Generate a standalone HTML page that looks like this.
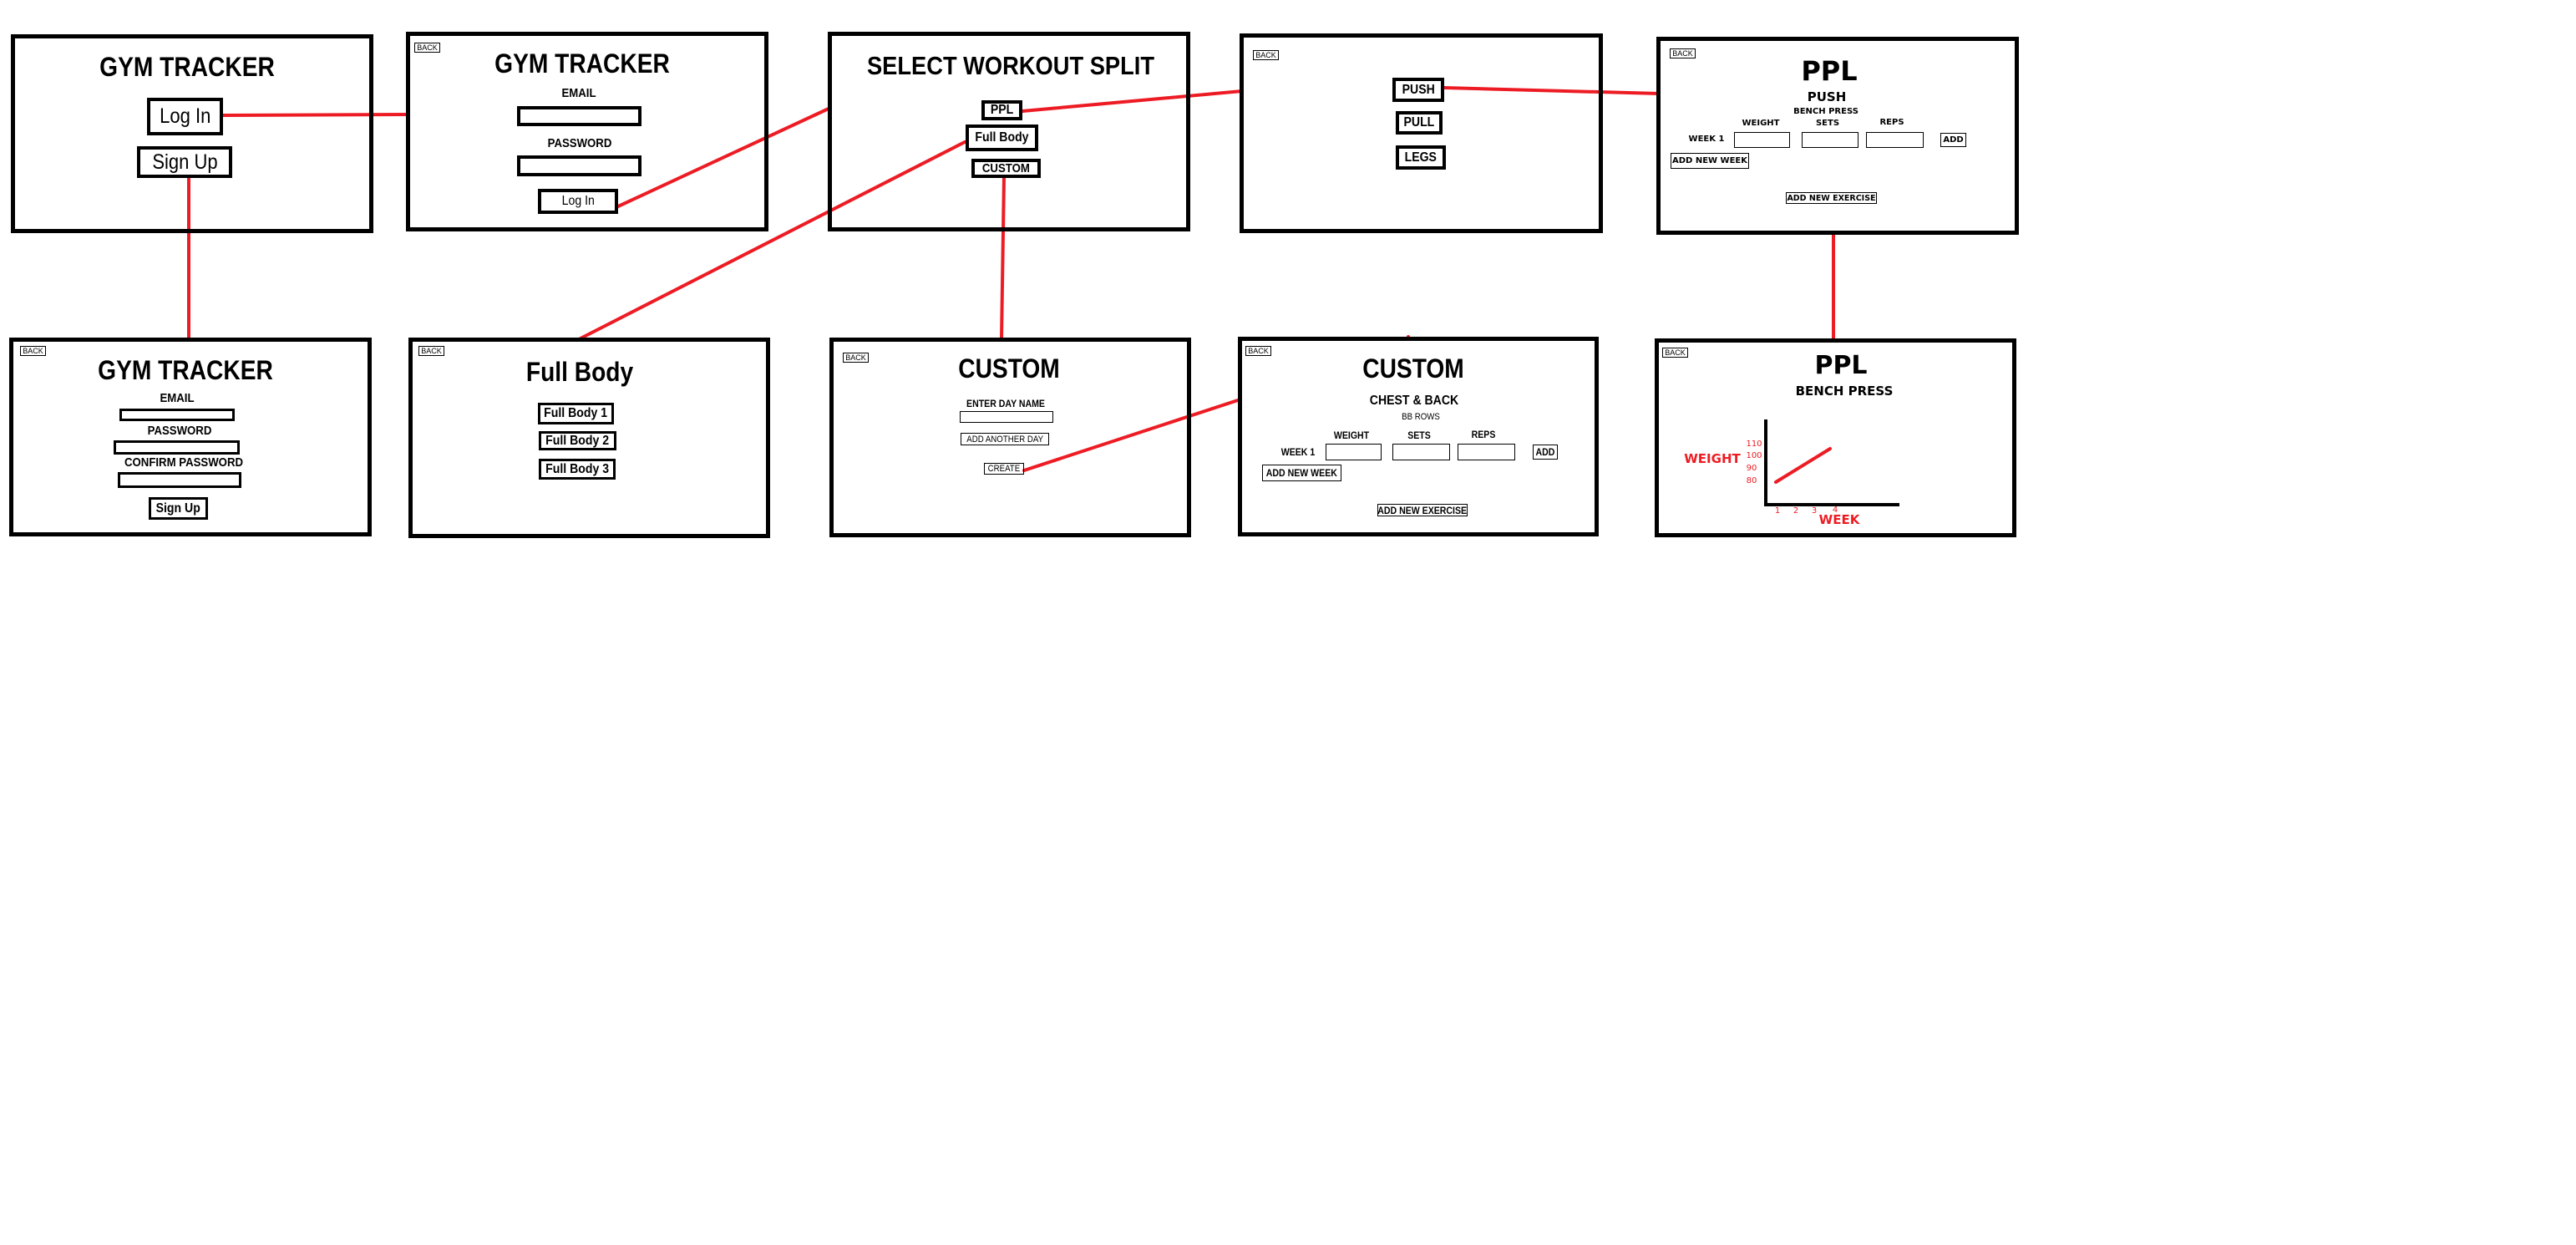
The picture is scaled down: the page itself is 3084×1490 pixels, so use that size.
<!DOCTYPE html>
<html><head><meta charset="utf-8"><style>
html,body{margin:0;padding:0;background:#fff;width:3084px;height:1490px;overflow:hidden;position:relative;font-family:"Liberation Sans",sans-serif;color:#000}
.b{position:absolute;border:5px solid #000;box-sizing:border-box}
.k{position:absolute;border:4px solid #000;box-sizing:border-box;display:flex;align-items:center;justify-content:center;white-space:nowrap;font-weight:bold}
.i{position:absolute;border:2px solid #000;box-sizing:border-box;display:flex;align-items:center;justify-content:center;white-space:nowrap}
.t{position:absolute;white-space:nowrap;line-height:1;transform:translateX(-50%) scaleX(.88);font-weight:bold}
.bk{position:absolute;border:1px solid #000;font-size:9px;line-height:10px;padding:0 1px;box-sizing:border-box;height:12px;width:31px;text-align:center}
.s{display:inline-block;transform:scaleX(.88)}
.r{color:#ed1c24}
.w{font-family:"DejaVu Sans",sans-serif;transform:translateX(-50%)}
</style></head><body>
<svg style="position:absolute;left:0;top:0" width="3084" height="1490">
<g stroke="#ed1c24" stroke-width="4" fill="none" stroke-linecap="round">
<line x1="267" y1="138" x2="487" y2="137"/>
<line x1="226" y1="214" x2="226" y2="405"/>
<line x1="740" y1="247" x2="992" y2="130"/>
<line x1="1155" y1="170" x2="695" y2="405"/>
<line x1="1224" y1="133" x2="1487" y2="109"/>
<line x1="1202" y1="213" x2="1199" y2="405"/>
<line x1="1729" y1="105" x2="1986" y2="112"/>
<line x1="1226" y1="563" x2="1482" y2="479"/>
<line x1="2195" y1="281" x2="2195" y2="405"/>
<line x1="1686" y1="403" x2="1686" y2="405"/>
</g></svg>

<!-- Box1 -->
<div class="b" style="left:13px;top:41px;width:434px;height:238px"></div>
<div class="t" style="left:224px;top:64px;font-size:32px">GYM TRACKER</div>
<div class="k" style="left:176px;top:117px;width:91px;height:45px;font-weight:normal;font-size:25px"><span class="s">Log In</span></div>
<div class="k" style="left:164px;top:175px;width:114px;height:38px;font-weight:normal;font-size:25px"><span class="s">Sign Up</span></div>

<!-- Box2 -->
<div class="b" style="left:486px;top:38px;width:434px;height:239px"></div>
<div class="bk" style="left:496px;top:51px">BACK</div>
<div class="t" style="left:697px;top:60px;font-size:32px">GYM TRACKER</div>
<div class="t" style="left:693px;top:104px;font-size:15px">EMAIL</div>
<div class="k" style="left:619px;top:127px;width:149px;height:24px"></div>
<div class="t" style="left:694px;top:164px;font-size:15px">PASSWORD</div>
<div class="k" style="left:619px;top:186px;width:149px;height:25px"></div>
<div class="k" style="left:644px;top:226px;width:96px;height:30px;font-weight:normal;font-size:16px"><span class="s">Log In</span></div>

<!-- Box3 select -->
<div class="b" style="left:991px;top:38px;width:434px;height:239px"></div>
<div class="t" style="left:1210px;top:63px;font-size:31px">SELECT WORKOUT SPLIT</div>
<div class="k" style="left:1175px;top:120px;width:49px;height:24px;font-size:16px"><span class="s">PPL</span></div>
<div class="k" style="left:1156px;top:149px;width:87px;height:32px;font-size:16px"><span class="s">Full Body</span></div>
<div class="k" style="left:1163px;top:190px;width:83px;height:23px;font-size:15px"><span class="s">CUSTOM</span></div>

<!-- Box6 push pull legs -->
<div class="b" style="left:1484px;top:40px;width:435px;height:239px"></div>
<div class="bk" style="left:1500px;top:60px">BACK</div>
<div class="k" style="left:1667px;top:93px;width:62px;height:29px;font-size:16px"><span class="s">PUSH</span></div>
<div class="k" style="left:1671px;top:133px;width:56px;height:28px;font-size:16px"><span class="s">PULL</span></div>
<div class="k" style="left:1671px;top:174px;width:60px;height:29px;font-size:16px"><span class="s">LEGS</span></div>

<!-- Box9 PPL -->
<div class="b" style="left:1983px;top:44px;width:434px;height:237px"></div>
<div class="bk" style="left:1999px;top:58px">BACK</div>
<div class="t w" style="left:2190px;top:69px;font-size:32px">PPL</div>
<div class="t w" style="left:2187px;top:109px;font-size:15px">PUSH</div>
<div class="t w" style="left:2186px;top:129px;font-size:10px">BENCH PRESS</div>
<div class="t w" style="left:2108px;top:143px;font-size:10px">WEIGHT</div>
<div class="t w" style="left:2188px;top:143px;font-size:10px">SETS</div>
<div class="t w" style="left:2265px;top:142px;font-size:10px">REPS</div>
<div class="t w" style="left:2043px;top:162px;font-size:10px">WEEK 1</div>
<div class="i" style="left:2076px;top:158px;width:67px;height:19px;border-width:1.5px"></div>
<div class="i" style="left:2157px;top:158px;width:68px;height:19px;border-width:1.5px"></div>
<div class="i" style="left:2234px;top:158px;width:69px;height:19px;border-width:1.5px"></div>
<div class="i" style="left:2323px;top:159px;width:31px;height:17px;border-width:1.5px;font-family:'DejaVu Sans',sans-serif;font-weight:bold;font-size:10px">ADD</div>
<div class="i" style="left:2000px;top:183px;width:94px;height:19px;border-width:1.5px;font-family:'DejaVu Sans',sans-serif;font-weight:bold;font-size:10px">ADD NEW WEEK</div>
<div class="i" style="left:2138px;top:230px;width:109px;height:14px;border-width:1.5px;font-family:'DejaVu Sans',sans-serif;font-weight:bold;font-size:9.5px">ADD NEW EXERCISE</div>

<!-- Box4 signup -->
<div class="b" style="left:11px;top:404px;width:434px;height:238px"></div>
<div class="bk" style="left:24px;top:414px">BACK</div>
<div class="t" style="left:222px;top:427px;font-size:32px">GYM TRACKER</div>
<div class="t" style="left:212px;top:469px;font-size:15px">EMAIL</div>
<div class="k" style="left:143px;top:489px;width:138px;height:15px;border-width:3px"></div>
<div class="t" style="left:215px;top:508px;font-size:15px">PASSWORD</div>
<div class="k" style="left:136px;top:527px;width:151px;height:17px;border-width:3px"></div>
<div class="t" style="left:220px;top:546px;font-size:15px">CONFIRM PASSWORD</div>
<div class="k" style="left:141px;top:565px;width:148px;height:19px;border-width:3px"></div>
<div class="k" style="left:178px;top:595px;width:71px;height:27px;border-width:3px;font-size:16px"><span class="s">Sign Up</span></div>

<!-- Box5 full body -->
<div class="b" style="left:489px;top:404px;width:433px;height:240px"></div>
<div class="bk" style="left:501px;top:414px">BACK</div>
<div class="t" style="left:694px;top:429px;font-size:32px">Full Body</div>
<div class="k" style="left:644px;top:482px;width:91px;height:26px;border-width:3px;font-size:16px"><span class="s">Full Body 1</span></div>
<div class="k" style="left:645px;top:516px;width:93px;height:23px;border-width:3px;font-size:16px"><span class="s">Full Body 2</span></div>
<div class="k" style="left:645px;top:549px;width:92px;height:25px;border-width:3px;font-size:16px"><span class="s">Full Body 3</span></div>

<!-- Box7 custom -->
<div class="b" style="left:993px;top:404px;width:433px;height:239px"></div>
<div class="bk" style="left:1009px;top:422px">BACK</div>
<div class="t" style="left:1208px;top:425px;font-size:32px">CUSTOM</div>
<div class="t" style="left:1204px;top:477px;font-size:12px">ENTER DAY NAME</div>
<div class="i" style="left:1149px;top:492px;width:112px;height:14px;border-width:1.5px"></div>
<div class="i" style="left:1150px;top:518px;width:106px;height:15px;border-width:1.5px;font-size:11px"><span class="s">ADD ANOTHER DAY</span></div>
<div class="i" style="left:1178px;top:554px;width:48px;height:14px;border-width:1.5px;font-size:11px"><span class="s">CREATE</span></div>

<!-- Box8 custom detail -->
<div class="b" style="left:1482px;top:403px;width:432px;height:239px"></div>
<div class="bk" style="left:1491px;top:414px">BACK</div>
<div class="t" style="left:1692px;top:425px;font-size:32px">CUSTOM</div>
<div class="t" style="left:1693px;top:472px;font-size:16px">CHEST &amp; BACK</div>
<div class="t" style="left:1701px;top:494px;font-size:11px;font-weight:normal">BB ROWS</div>
<div class="t" style="left:1618px;top:515px;font-size:12px">WEIGHT</div>
<div class="t" style="left:1699px;top:515px;font-size:12px">SETS</div>
<div class="t" style="left:1776px;top:514px;font-size:12px">REPS</div>
<div class="t" style="left:1554px;top:535px;font-size:12px">WEEK 1</div>
<div class="i" style="left:1587px;top:531px;width:67px;height:20px;border-width:1.5px"></div>
<div class="i" style="left:1667px;top:531px;width:69px;height:20px;border-width:1.5px"></div>
<div class="i" style="left:1745px;top:531px;width:69px;height:20px;border-width:1.5px"></div>
<div class="i" style="left:1835px;top:532px;width:30px;height:18px;border-width:1.5px;font-weight:bold;font-size:12px"><span class="s">ADD</span></div>
<div class="i" style="left:1511px;top:556px;width:95px;height:20px;border-width:1.5px;font-weight:bold;font-size:12px"><span class="s">ADD NEW WEEK</span></div>
<div class="i" style="left:1649px;top:603px;width:108px;height:15px;border-width:1.5px;font-weight:bold;font-size:12px"><span class="s">ADD NEW EXERCISE</span></div>

<!-- Box10 graph -->
<div class="b" style="left:1981px;top:405px;width:433px;height:238px"></div>
<div class="bk" style="left:1990px;top:416px">BACK</div>
<div class="t w" style="left:2204px;top:423px;font-size:30px">PPL</div>
<div class="t w" style="left:2208px;top:461px;font-size:15px">BENCH PRESS</div>
<svg style="position:absolute;left:0;top:0" width="3084" height="1490">
<line x1="2114" y1="502" x2="2114" y2="606" stroke="#000" stroke-width="4"/>
<line x1="2112" y1="604" x2="2274" y2="604" stroke="#000" stroke-width="4"/>
<line x1="2126" y1="577" x2="2191" y2="537" stroke="#ed1c24" stroke-width="4" stroke-linecap="round"/>
</svg>
<div class="t w r" style="left:2050px;top:542px;font-size:15px">WEIGHT</div>
<div class="t w r" style="left:2100px;top:527px;font-size:10px;font-weight:normal">110</div>
<div class="t w r" style="left:2100px;top:541px;font-size:10px;font-weight:normal">100</div>
<div class="t w r" style="left:2097px;top:556px;font-size:10px;font-weight:normal">90</div>
<div class="t w r" style="left:2097px;top:571px;font-size:10px;font-weight:normal">80</div>
<div class="t w r" style="left:2128px;top:607px;font-size:10px;font-weight:normal">1</div>
<div class="t w r" style="left:2150px;top:607px;font-size:10px;font-weight:normal">2</div>
<div class="t w r" style="left:2172px;top:607px;font-size:10px;font-weight:normal">3</div>
<div class="t w r" style="left:2197px;top:606px;font-size:10px;font-weight:normal">4</div>
<div class="t w r" style="left:2202px;top:615px;font-size:15px">WEEK</div>
</body></html>
